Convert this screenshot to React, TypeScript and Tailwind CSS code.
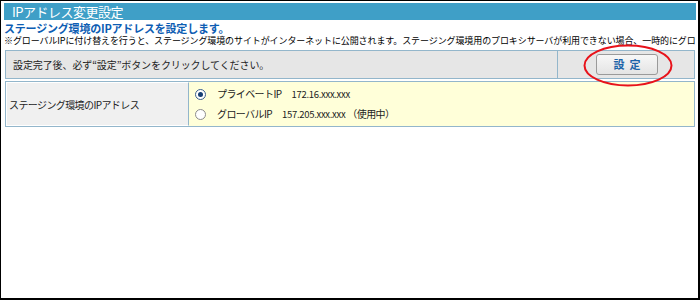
import { useState } from 'react'

const jp = "font-['Meiryo','Noto_Sans_CJK_JP',sans-serif]"

function Radio({ checked, onClick }: { checked: boolean; onClick: () => void }) {
  return (
    <button
      type="button"
      onClick={onClick}
      className={`w-[11px] h-[11px] rounded-full border flex items-center justify-center shrink-0 ${
        checked ? 'border-[#3b5f8c] bg-white' : 'border-[#8c8c8c] bg-white'
      }`}
    >
      {checked && <span className="w-[5px] h-[5px] rounded-full bg-[#163f73]" />}
    </button>
  )
}

export default function App() {
  const [ip, setIp] = useState<'private' | 'global'>('private')

  return (
    <div
      className={`relative w-[700px] h-[300px] overflow-hidden bg-white border-l border-t border-r-2 border-b-2 border-black pl-[3px] pr-[2px] pt-[2px] ${jp}`}
    >
      {/* Header */}
      <div className="h-[17px] bg-[#3f9fc7] text-white text-[13px] leading-[17px] pl-[8px] tracking-[-0.5px]">
        IPアドレス変更設定
      </div>

      <div className="text-[#0d5db3] text-[11px] font-bold leading-[13px] mt-[2px] tracking-[-0.2px]">
        ステージング環境のIPアドレスを設定します。
      </div>
      <div className="overflow-hidden">
        <div className="text-black text-[9px] leading-[12px] whitespace-nowrap tracking-[-0.1px]">
          ※グローバルIPに付け替えを行うと、ステージング環境のサイトがインターネットに公開されます。ステージング環境用のプロキシサーバが利用できない場合、一時的にグロ
        </div>
      </div>

      {/* Notice row */}
      <div className="ml-[1px] mr-[1px] mt-[3px] h-[29px] flex border border-[#93b6cb] bg-[#e6e6e6]">
        <div className="flex-1 flex items-center pl-[7px] text-[10px] text-[#222] tracking-[-0.1px] border-r border-[#93b6cb]">
          設定完了後、必ず“設定”ボタンをクリックしてください。
        </div>
        <div className="w-[136px] flex items-center pl-[38px]">
          <button
            type="button"
            className="w-[62px] h-[21px] rounded-[3px] border border-[#9a9a9a] bg-gradient-to-b from-[#f7f7f7] to-[#e4e4e4] text-[#1b63a8] text-[11px] font-bold tracking-[5px] pl-[5px]"
          >
            設定
          </button>
        </div>
      </div>

      {/* IP row */}
      <div className="ml-[1px] mr-[1px] mt-[2px] h-[46px] flex border border-[#93b6cb]">
        <div className="w-[183px] flex items-center pl-[2px] bg-[#f0f0f0] border border-white border-r-[#93b6cb] text-[10px] text-[#222] tracking-[-0.6px]">
          ステージング環境のIPアドレス
        </div>
        <div className="flex-1 bg-[#ffffd9] flex flex-col justify-center gap-[9px] pl-[6px] text-[10px] leading-[11px] text-[#222]">
          <label className="flex items-center gap-[11px] h-[11px]">
            <Radio checked={ip === 'private'} onClick={() => setIp('private')} />
            <span className="tracking-[-0.6px]">
              プライベートIP<span className="ml-[10px] text-[9.5px] tracking-[-0.3px]">172.16.xxx.xxx</span>
            </span>
          </label>
          <label className="flex items-center gap-[11px] h-[11px]">
            <Radio checked={ip === 'global'} onClick={() => setIp('global')} />
            <span className="tracking-[-0.6px]">
              グローバルIP<span className="ml-[10px] text-[9.5px] tracking-[-0.3px]">157.205.xxx.xxx</span>
              <span className="ml-[2px]">（使用中）</span>
            </span>
          </label>
        </div>
      </div>

      {/* Annotation ellipse */}
      <svg className="absolute left-[582px] top-[43px] w-[90px] h-[43px]" viewBox="0 0 90 43" fill="none">
        <ellipse cx="45" cy="21.5" rx="43.5" ry="20" stroke="#e8121a" strokeWidth="2" />
      </svg>
    </div>
  )
}
